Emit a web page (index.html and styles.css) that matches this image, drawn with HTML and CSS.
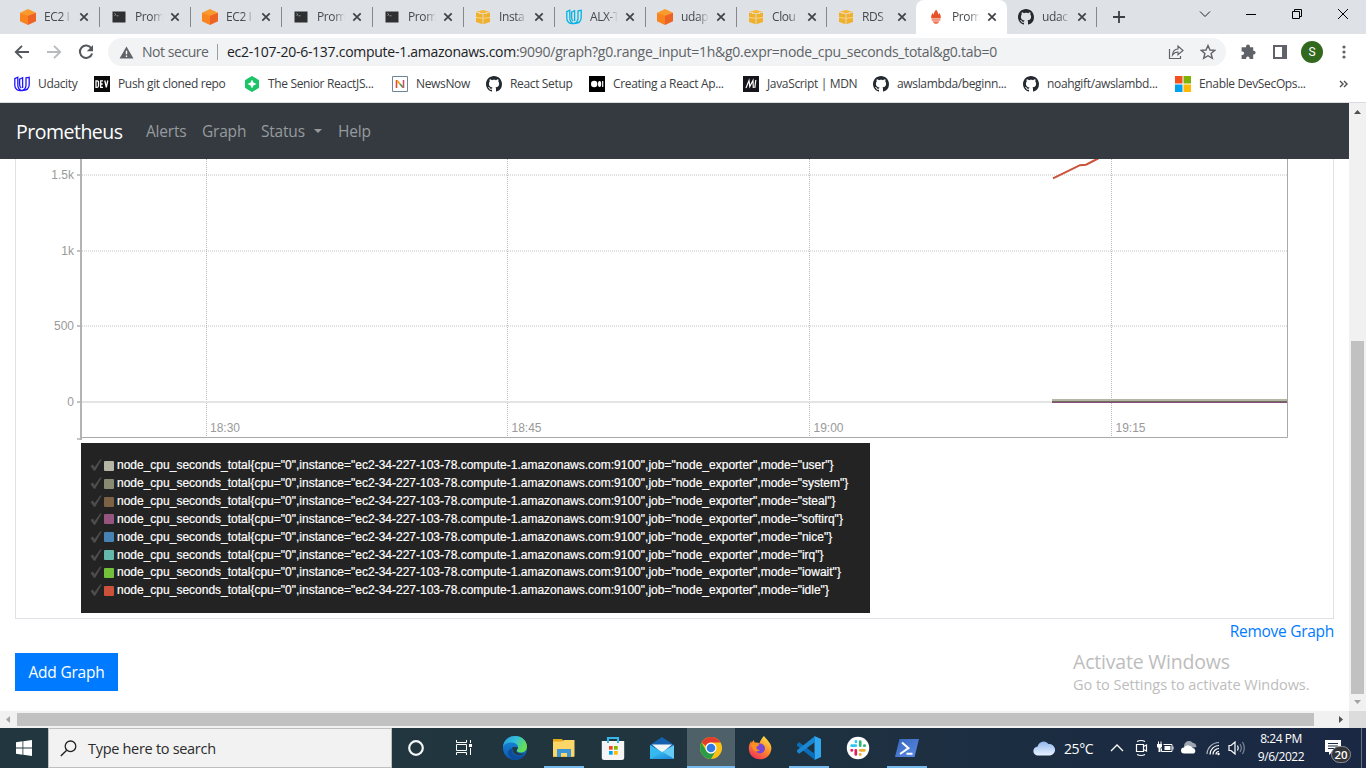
FILE: index.html
```html
<!DOCTYPE html>
<html lang="en">
<head>
<meta charset="utf-8">
<title>Prometheus Time Series Collection and Processing Server</title>
<link rel="stylesheet" href="styles.css">
</head>
<body>
<svg class="sprite" aria-hidden="true">
  <defs>
    <linearGradient id="edgeA" x1="0" y1="0" x2="1" y2="0.4"><stop offset="0" stop-color="#2499e0"/><stop offset=".55" stop-color="#35c1d8"/><stop offset="1" stop-color="#66e04f"/></linearGradient>
    <linearGradient id="edgeB" x1="0" y1="0" x2="0" y2="1"><stop offset="0" stop-color="#1b8fdc"/><stop offset="1" stop-color="#0a57b0"/></linearGradient>
    <linearGradient id="fox" x1="0.8" y1="0" x2="0.2" y2="1"><stop offset="0" stop-color="#ffe34a"/><stop offset=".45" stop-color="#ff9328"/><stop offset="1" stop-color="#f52a5b"/></linearGradient>
    <linearGradient id="cloudG" x1="0" y1="0" x2="0" y2="1"><stop offset="0" stop-color="#8fb6ee"/><stop offset="1" stop-color="#eaf2ff"/></linearGradient>
    <linearGradient id="mailG" x1="0" y1="0" x2="1" y2="1"><stop offset="0" stop-color="#3cc6f5"/><stop offset="1" stop-color="#1a86db"/></linearGradient>
    <linearGradient id="psG" x1="0" y1="0" x2="1" y2="1"><stop offset="0" stop-color="#3565bd"/><stop offset="1" stop-color="#5b8be2"/></linearGradient>
  </defs>
  <symbol id="ec2" viewBox="0 0 16 16"><path fill="#fb9a2c" d="M8 0l8 3.800L8 7.500 0 3.800z"/><path fill="#f8831f" d="M0 3.800L8 6.800V16l-8-3.800z"/><path fill="#ec6324" d="M16 3.800L8 6.800V16l8-3.800z"/></symbol>
  <symbol id="term" viewBox="0 0 16 16"><rect x="1.500" y="2.500" width="13" height="11" fill="#2d2f31"/><path d="M3.500 4.500l1.500 1-1.500 1M5.500 6.800h2" stroke="#aaa" fill="none" stroke-width=".8"/></symbol>
  <symbol id="aws" viewBox="0 0 16 16"><path fill="#f7b731" d="M8 1l6.500 1.700L8 4.600 1.500 2.700z"/><path fill="#efb02d" d="M1 3.500l6.600 1.800v9.900L1 13zM15 3.500L8.400 5.300v9.900L15 13z"/><path d="M4.500 2.800v2M11.500 2.800v2M1 8.500l6.600.8M15 8.500l-6.600.8" stroke="#ffe6a4" stroke-width=".7"/></symbol>
  <symbol id="uda" viewBox="0 0 16 16"><path fill="none" stroke="currentColor" stroke-width="1.300" d="M.8 2.700l3-1.500v7.600c0 3.100 1.200 5 4 5.800-4.300.6-7-1.600-7-5.300zM7.200 12c-1.300-.8-1.600-1.900-1.600-3.500V3.200l3-1.500V12M12 1.800l3.200-.5v7.200c0 3.500-2.600 6.100-7.400 6.100 2.800-.7 4.200-2.500 4.200-5.500z"/></symbol>
  <symbol id="prom" viewBox="0 0 16 16"><path fill="#e6522c" d="M8 .5c1.300 1.800 2.500 3 2 5 .9-.5 1.100-1 1.300-1.700 1 2 2 3.700 1.300 5.800H3.400c-.7-2.100.2-3.800 1.300-5.800.2.700.5 1.200 1.300 1.700C5.500 3.600 7 2.600 8 .500z"/><path fill="#ee7858" d="M3.600 10.200h8.800v1.500H3.600z"/><path fill="#ee7858" d="M5 12.300h6c-.2 1.900-1.400 2.700-3 2.700s-2.800-.8-3-2.700z"/></symbol>
  <symbol id="gh" viewBox="0 0 16 16"><path fill="#24292f" d="M8 0C3.580 0 0 3.580 0 8c0 3.540 2.290 6.530 5.470 7.590.4.070.55-.17.55-.38 0-.19-.01-.82-.01-1.490-2.010.37-2.530-.49-2.690-.94-.09-.23-.48-.94-.82-1.130-.28-.15-.68-.52-.01-.53.63-.01 1.080.58 1.230.82.72 1.210 1.870.87 2.330.66.070-.52.280-.87.510-1.070-1.780-.2-3.640-.89-3.640-3.950 0-.87.310-1.590.82-2.150-.08-.2-.36-1.020.08-2.120 0 0 .67-.21 2.200.82.640-.18 1.320-.27 2-.27s1.360.09 2 .27c1.530-1.040 2.200-.82 2.200-.82.440 1.100.160 1.920.080 2.120.510.56.820 1.270.820 2.150 0 3.070-1.870 3.750-3.650 3.950.290.25.540.73.540 1.480 0 1.070-.01 1.930-.01 2.200 0 .21.150.46.550.38A8.010 8.010 0 0016 8c0-4.420-3.580-8-8-8z"/></symbol>
  <symbol id="x" viewBox="0 0 10 10"><path d="M1.300 1.300l7.400 7.400M8.700 1.300L1.300 8.700" stroke="#3f4246" stroke-width="1.700"/></symbol>
  <symbol id="check" viewBox="0 0 12 12"><path d="M.5 6.900l2.400-1.300 1.600 2.600L10.400.3l1.200.4L5.200 11.700H3.900z" fill="#4d4d4d"/></symbol>
</svg>

<header class="tabs">
  <div class="tab"><svg class="fav"><use href="#ec2"/></svg><span class="tt">EC2 I</span><svg class="close"><use href="#x"/></svg></div>
  <div class="tab"><svg class="fav"><use href="#term"/></svg><span class="tt">Prom</span><svg class="close"><use href="#x"/></svg></div>
  <div class="tab"><svg class="fav"><use href="#ec2"/></svg><span class="tt">EC2 I</span><svg class="close"><use href="#x"/></svg></div>
  <div class="tab"><svg class="fav"><use href="#term"/></svg><span class="tt">Prom</span><svg class="close"><use href="#x"/></svg></div>
  <div class="tab"><svg class="fav"><use href="#term"/></svg><span class="tt">Prom</span><svg class="close"><use href="#x"/></svg></div>
  <div class="tab"><svg class="fav"><use href="#aws"/></svg><span class="tt">Insta</span><svg class="close"><use href="#x"/></svg></div>
  <div class="tab"><svg class="fav cyan"><use href="#uda"/></svg><span class="tt">ALX-T</span><svg class="close"><use href="#x"/></svg></div>
  <div class="tab"><svg class="fav"><use href="#ec2"/></svg><span class="tt">udap</span><svg class="close"><use href="#x"/></svg></div>
  <div class="tab narrow"><svg class="fav"><use href="#aws"/></svg><span class="tt">Clou</span><svg class="close"><use href="#x"/></svg></div>
  <div class="tab nosep"><svg class="fav"><use href="#aws"/></svg><span class="tt">RDS</span><svg class="close"><use href="#x"/></svg></div>
  <div class="tab active"><svg class="fav"><use href="#prom"/></svg><span class="tt">Prom</span><svg class="close"><use href="#x"/></svg></div>
  <div class="tab narrow"><svg class="fav"><use href="#gh"/></svg><span class="tt">udac</span><svg class="close"><use href="#x"/></svg></div>
  <svg class="plus" viewBox="0 0 12 12"><path d="M6 0v12M0 6h12" stroke="#3c4043" stroke-width="1.800"/></svg>
  <div class="winbtns">
    <svg viewBox="0 0 12 12"><path d="M1 3.500l5 5 5-5" fill="none" stroke="#222"/></svg>
    <svg viewBox="0 0 12 12"><path d="M1 6.500h10" stroke="#000"/></svg>
    <svg viewBox="0 0 12 12"><path d="M1.500 3.500h7v7h-7zM3.500 3.500v-2h7v7h-2" fill="none" stroke="#000"/></svg>
    <svg viewBox="0 0 12 12"><path d="M1 1l10 10M11 1L1 11" stroke="#000"/></svg>
  </div>
</header>

<div class="toolbar">
  <svg class="nav-i" viewBox="0 0 16 16"><path d="M15 8H2M8 1.800L1.800 8 8 14.200" fill="none" stroke="#54575b" stroke-width="1.900"/></svg>
  <svg class="nav-i" viewBox="0 0 16 16"><path d="M1 8h13M8 1.800L14.200 8 8 14.200" fill="none" stroke="#b9bbbe" stroke-width="1.900"/></svg>
  <svg class="nav-i" viewBox="0 0 16 16"><path d="M13.300 4.300A6.200 6.200 0 1 0 14.100 9.400" fill="none" stroke="#54575b" stroke-width="2"/><path d="M15 1v6.200H8.800z" fill="#54575b"/></svg>
  <div class="omni">
    <svg class="warn" viewBox="0 0 16 14"><path d="M8 .5L15.500 13.500H.5z" fill="#5f6368"/><path d="M8 5v4M8 10.200v1.600" stroke="#fff" stroke-width="1.500"/></svg>
    <span class="notsec">Not secure</span>
    <span class="url"><b>ec2-107-20-6-137.compute-1.amazonaws.com</b>:9090/graph?g0.range_input=1h&amp;g0.expr=node_cpu_seconds_total&amp;g0.tab=0</span>
    <svg class="share" viewBox="0 0 16 16"><path d="M1.500 5v9.500h11V12M4.500 11c.3-4 2.500-5.800 5.500-6V2l5 4.500-5 4.300V8C7.700 8 5.900 9 4.500 11z" fill="none" stroke="#5f6368" stroke-width="1.200"/></svg>
    <svg class="star" viewBox="0 0 16 16"><path d="M8 1.500l2 4.500 4.800.4-3.700 3.100 1.200 4.800L8 11.700l-4.300 2.600 1.200-4.800L1.200 6.400 6 6z" fill="none" stroke="#5f6368" stroke-width="1.400"/></svg>
  </div>
  <svg class="t-puz" viewBox="0 0 16 16"><path fill="#5f6368" d="M6 3.200V2.500a2 2 0 0 1 4 0v.7h3.200v3.500h.5a1.900 1.900 0 0 1 0 3.800h-.5V15H9.500v-.7a1.700 1.700 0 0 0-3.400 0v.7H1.600v-4h.8a1.700 1.700 0 0 0 0-3.500h-.8V3.200z"/></svg>
  <svg class="t-side" viewBox="0 0 14 14"><path d="M1 1h12v12H1z" fill="#fff" stroke="#5f6368" stroke-width="2"/><path d="M9 1h4v12H9z" fill="#5f6368"/></svg>
  <span class="avatar">S</span>
  <svg class="t-dots" viewBox="0 0 4 14"><circle cx="2" cy="2" r="1.600" fill="#5f6368"/><circle cx="2" cy="7" r="1.600" fill="#5f6368"/><circle cx="2" cy="12" r="1.600" fill="#5f6368"/></svg>
</div>

<nav class="bookmarks">
  <div class="bm w80"><svg class="blue"><use href="#uda"/></svg><span>Udacity</span></div>
  <div class="bm w150"><svg viewBox="0 0 16 16"><path d="M0 0h16v16H0z" fill="#0a0a0a"/><path d="M2 4.800h1.200q1.300 0 1.300 1.500v3.500q0 1.500-1.300 1.500H2zM9 4.800H6.700v6.500H9M6.700 8h2M10.800 4.500l1.500 6.800 1.500-6.800" stroke="#fff" fill="none" stroke-width="1.300"/></svg><span>Push git cloned repo</span></div>
  <div class="bm w148"><svg viewBox="0 0 16 16"><path d="M8 .5l6.500 3.800v7.400L8 15.500l-6.500-3.800V4.300z" fill="#19c566" stroke="#19c566" stroke-linejoin="round"/><path d="M8 3.500L9.500 6.500 12.500 8 9.500 9.500 8 12.500 6.500 9.500 3.500 8l3-1.500z" fill="#fff"/></svg><span>The Senior ReactJS...</span></div>
  <div class="bm w94"><svg viewBox="0 0 16 16"><path d="M.5.5h15v15H.5z" fill="#fff" stroke="#6d8799"/><path d="M4.500 12V4" stroke="#e6453a" stroke-width="1.600"/><path d="M5 4.500l3 3.500" stroke="#f0a020" stroke-width="1.800"/><path d="M8 8l3 3.500" stroke="#43a047" stroke-width="1.800"/><path d="M11.500 4v8" stroke="#d0506e" stroke-width="1.600"/></svg><span>NewsNow</span></div>
  <div class="bm w103"><svg><use href="#gh"/></svg><span>React Setup</span></div>
  <div class="bm w154"><svg viewBox="0 0 16 16"><path d="M0 0h16v16H0z"/><circle cx="5.200" cy="8" r="3.200" fill="#fff"/><ellipse cx="10.600" cy="8" rx="1.600" ry="3" fill="#fff"/><path d="M13.700 5v6" stroke="#fff" stroke-width="1.200"/></svg><span>Creating a React Ap...</span></div>
  <div class="bm w130"><svg viewBox="0 0 16 16"><path d="M0 0h16v16H0z" fill="#15141a"/><path d="M3 12L6 4.500 6.800 10.500 10 4.500l.3 7.500M12.800 4l-1 8" stroke="#fff" fill="none" stroke-width="1.200"/></svg><span>JavaScript | MDN</span></div>
  <div class="bm w150"><svg><use href="#gh"/></svg><span>awslambda/beginn...</span></div>
  <div class="bm w152"><svg><use href="#gh"/></svg><span>noahgift/awslambd...</span></div>
  <div class="bm w150"><svg viewBox="0 0 16 16"><path d="M0 0h7.500v7.500H0z" fill="#f4511e"/><path d="M8.500 0H16v7.500H8.500z" fill="#7cb305"/><path d="M0 8.500h7.500V16H0z" fill="#00a1f1"/><path d="M8.500 8.500H16V16H8.500z" fill="#ffb900"/></svg><span>Enable DevSecOps...</span></div>
  <svg class="more" viewBox="0 0 9 8"><path d="M1 1l3 3-3 3M5 1l3 3-3 3" fill="none" stroke="#4b4e52" stroke-width="1.400"/></svg>
</nav>

<div class="viewport">
  <main class="page">
    <nav class="navbar">
      <a class="brand">Prometheus</a>
      <a class="nl alerts">Alerts</a><a class="nl graphl">Graph</a><a class="nl status">Status<i class="caret"></i></a><a class="nl">Help</a>
    </nav>
    <section class="panel">
      <svg class="chart" viewBox="16 159 1317 282">
        <g stroke="#e0e0e0" stroke-width="2" stroke-dasharray="1 1">
          <path d="M82 175H1287M82 251H1287M82 326H1287"/>
          <path d="M206.500 159V437M507.500 159V437M809.500 159V437M1111.500 159V437" stroke="#b8b8b8" stroke-width="1"/>
        </g>
        <path d="M77 402H1052" stroke="#e4e4e4" stroke-width="2"/>
        <path d="M77 175h4M77 251h4M77 326h4M77 402h4M77 439h4" stroke="#c4c4c4" stroke-width="2"/>
        <path d="M81 159V440" stroke="#b3b3b3" stroke-width="2"/>
        <path d="M82 437.500H1287.500V159" fill="none" stroke="#a9a9a9"/>
        <path d="M1053 178.300L1080 165.200 1086 164.700 1098 158.500 1104 155" fill="none" stroke="#cb513a" stroke-width="2"/>
        <path d="M1052 400H1287" stroke="#b6b6a4" stroke-width="2"/>
        <path d="M1052 401.500H1287" stroke="#6d6e5f"/>
        <path d="M1052 402.500H1287" stroke="#8a4d78"/>
        <g class="yl"><text x="74" y="179">1.5k</text><text x="74" y="255">1k</text><text x="74" y="330">500</text><text x="74" y="406">0</text></g>
        <g class="xl"><text x="210" y="432">18:30</text><text x="511.500" y="432">18:45</text><text x="813.500" y="432">19:00</text><text x="1115.500" y="432">19:15</text></g>
      </svg>
      <ul class="legend">
        <li><svg class="ck"><use href="#check"/></svg><i class="sw user"></i>node_cpu_seconds_total{cpu="0",instance="ec2-34-227-103-78.compute-1.amazonaws.com:9100",job="node_exporter",mode="user"}</li>
        <li><svg class="ck"><use href="#check"/></svg><i class="sw system"></i>node_cpu_seconds_total{cpu="0",instance="ec2-34-227-103-78.compute-1.amazonaws.com:9100",job="node_exporter",mode="system"}</li>
        <li><svg class="ck"><use href="#check"/></svg><i class="sw steal"></i>node_cpu_seconds_total{cpu="0",instance="ec2-34-227-103-78.compute-1.amazonaws.com:9100",job="node_exporter",mode="steal"}</li>
        <li><svg class="ck"><use href="#check"/></svg><i class="sw softirq"></i>node_cpu_seconds_total{cpu="0",instance="ec2-34-227-103-78.compute-1.amazonaws.com:9100",job="node_exporter",mode="softirq"}</li>
        <li><svg class="ck"><use href="#check"/></svg><i class="sw nice"></i>node_cpu_seconds_total{cpu="0",instance="ec2-34-227-103-78.compute-1.amazonaws.com:9100",job="node_exporter",mode="nice"}</li>
        <li><svg class="ck"><use href="#check"/></svg><i class="sw irq"></i>node_cpu_seconds_total{cpu="0",instance="ec2-34-227-103-78.compute-1.amazonaws.com:9100",job="node_exporter",mode="irq"}</li>
        <li><svg class="ck"><use href="#check"/></svg><i class="sw iowait"></i>node_cpu_seconds_total{cpu="0",instance="ec2-34-227-103-78.compute-1.amazonaws.com:9100",job="node_exporter",mode="iowait"}</li>
        <li><svg class="ck"><use href="#check"/></svg><i class="sw idle"></i>node_cpu_seconds_total{cpu="0",instance="ec2-34-227-103-78.compute-1.amazonaws.com:9100",job="node_exporter",mode="idle"}</li>
      </ul>
    </section>
    <a class="remove">Remove Graph</a>
    <button class="add">Add Graph</button>
    <div class="activate"><p class="a1">Activate Windows</p><p class="a2">Go to Settings to activate Windows.</p></div>
  </main>
  <div class="vscroll"><svg viewBox="0 0 17 17"><path d="M5 11h7L8.500 7z" fill="#505050"/></svg><div class="vthumb"></div><svg viewBox="0 0 17 17"><path d="M5 6h7L8.500 10z" fill="#a3a3a3"/></svg></div>
  <div class="hscroll"><svg viewBox="0 0 17 17"><path d="M10 5v7L6 8.500z" fill="#a3a3a3"/></svg><div class="hthumb"></div><svg viewBox="0 0 17 17"><path d="M7 5v7l4-3.500z" fill="#505050"/></svg></div>
  <div class="corner"></div>
</div>

<footer class="taskbar">
  <div class="start"><svg viewBox="0 0 16 16"><path fill="#fff" d="M0 2.200L6.500 1.300V7.600H0zM7.300 1.200L16 0V7.600H7.300zM0 8.400h6.500v6.300L0 13.800zM7.300 8.400H16V16l-8.700-1.200z"/></svg></div>
  <div class="search"><svg viewBox="0 0 17 17"><circle cx="10.500" cy="6.300" r="5.300" fill="none" stroke="#222" stroke-width="1.300"/><path d="M6.700 10.200L.8 16" stroke="#222" stroke-width="1.400"/></svg><span>Type here to search</span></div>
  <div class="apps">
    <div class="app c1"><svg viewBox="0 0 24 24"><circle cx="12" cy="12" r="6.800" fill="none" stroke="#f4f6f7" stroke-width="2.200"/></svg></div>
    <div class="app c2"><svg viewBox="0 0 24 24"><path d="M3.500 4v2.500h10V4M3.500 19v-2.500h10V19M3.500 8.500h10v6h-10zM17.500 4v3M17.500 12v7" fill="none" stroke="#fff"/><path d="M16 8h3v3h-3z" fill="#fff"/></svg></div>
    <div class="app"><svg viewBox="0 0 24 24"><circle cx="12" cy="12" r="12" fill="url(#edgeB)"/><path d="M0 11C.5 4.500 5.500 0 12 0c7 0 12 5 12 10.500 0 4-3 6-6.200 6-2.500 0-4-1-4-2 0-.8 1.200-1.300 1.200-3.300C15 8.500 12 6.500 8 6.500S.8 8.500 0 11z" fill="url(#edgeA)"/><path d="M9 12.500c-.5 6 5 9.500 11 7l2-1.400c-2 3.600-6 5.900-10 5.900-4.500-1-7-4.500-7-7.500 0-2 1.500-3.500 4-4z" fill="#0d4d9b"/><path d="M9.500 11c-1 4 2 8.500 7 8.200 2.500-.2 4.500-1 5.800-2.200-1.500 .7-8.500 1.500-9-2.500 .3-.8 1.700-1.300 1.700-3.300z" fill="#203b47"/></svg></div>
    <div class="app on"><svg viewBox="0 0 24 24"><path d="M1 3h9l1.500 2H22v16H1z" fill="#e8a714"/><path d="M1 5.500h9L12 4h10.500v16.500H1z" fill="#fcd667"/><path d="M5 21v-8h14v8h-4v-4H9v4z" fill="#3d94d6"/></svg></div>
    <div class="app"><svg viewBox="0 0 24 24"><path d="M7 6V2h10v4" fill="none" stroke="#37b6ea" stroke-width="2.200"/><path d="M.8 5h22.400v16.500q0 2.500-2.500 2.500H3.300q-2.500 0-2.500-2.500z" fill="#f5f5f5"/><path d="M7 2v5M17 2v5" stroke="#37b6ea" stroke-width="2"/><path d="M8 10h3.700v3.700H8z" fill="#ee4b23"/><path d="M13 10h3.700v3.700H13z" fill="#7fba00"/><path d="M8 15h3.700v3.700H8z" fill="#00a4ef"/><path d="M13 15h3.700v3.700H13z" fill="#ffb900"/></svg></div>
    <div class="app"><svg viewBox="0 0 24 24"><path d="M0 9L12 1l12 8v6H0z" fill="#1560ae"/><path d="M2 8.500h20L12 17z" fill="#f1f5f8"/><path d="M0 9l24 14H0z" fill="#35b9ee"/><path d="M24 9v14L12 16z" fill="#64cdf5"/><path d="M0 23L12 16l12 7z" fill="url(#mailG)"/></svg></div>
    <div class="app cur"><svg viewBox="0 0 24 24"><circle cx="12" cy="12" r="11" fill="#fbc116"/><path d="M2.500 6.500A11 11 0 0 1 21.530 6.500H12a5.500 5.500 0 0 0-5 3.500z" fill="#e33b2e"/><path d="M2.500 6.500A11 11 0 0 0 12 23l4.800-8.300A5.500 5.500 0 0 1 7.200 14.700z" fill="#299c4a"/><circle cx="12" cy="12" r="5.500" fill="#fff"/><circle cx="12" cy="12" r="4.300" fill="#2f7be8"/></svg></div>
    <div class="app"><svg viewBox="0 0 24 24"><path d="M16 0c1 2 3 3 4.500 5.500C22 7 24 10 23.200 14 22 20 17.500 23.300 12 23.300 5.500 23.300 1 19 .8 12.500.7 9 2 7 3.200 5l.5 2C4.500 5.500 5 4.500 5.800 4l.8 2.500c1.500-.3 3.500 0 5 .5C12.500 4 14 2 16 0z" fill="url(#fox)"/><circle cx="12" cy="12.500" r="5" fill="#7a46d8"/><path d="M3 8.500c3-2 6-1.500 8.500.5l-3 1.800c-.5 2 1 3.500 3.500 3.200-3 3-7 .8-7.500-2z" fill="#ff8f1f"/></svg></div>
    <div class="app on"><svg viewBox="0 0 24 24"><path d="M17.500 0L24 3v18l-6.500 3z" fill="#31a7f0"/><path d="M0 8l2.200-1.800L18 18v6L0 9.700z" fill="#0a6fb8"/><path d="M0 16l2.200 1.800L18 6V0L0 14.300z" fill="#1b87d3"/></svg></div>
    <div class="app"><svg viewBox="0 0 24 24"><circle cx="12" cy="12" r="11.200" fill="#fff"/><g stroke-width="2.700" stroke-linecap="round"><path d="M9.900 5.300V6M5.600 9.700h4.200" stroke="#36c5f0"/><path d="M14.200 5.600v4.100M18.300 9.700h.4" stroke="#2eb67d"/><path d="M9.800 14.300v4.100M5.600 14.300H6" stroke="#e01e5a"/><path d="M14.200 14.300h4.200M14.200 18.300v.4" stroke="#ecb22e"/></g></svg></div>
    <div class="app on"><svg viewBox="0 0 24 24"><path d="M4.500 3H24l-4.500 18H0z" fill="url(#psG)"/><path d="M7 6.500l6.500 5.700L5 18M11.500 17.700h6" fill="none" stroke="#fff" stroke-width="2"/></svg></div>
  </div>
  <div class="tray">
    <svg class="wx" viewBox="0 0 22 16"><path d="M5 15.500a4.500 4.500 0 0 1-.3-9A6 6 0 0 1 15.500 4a5.500 5.500 0 0 1 1.500 11.500z" fill="url(#cloudG)"/></svg>
    <span class="temp">25°C</span>
    <svg class="tr" viewBox="0 0 24 24"><path d="M6 15l6-6 6 6" fill="none" stroke="#fff" stroke-width="1.300"/></svg>
    <svg class="tr" viewBox="0 0 24 24"><path d="M7.500 8.500h7v7h-7zM14.500 10.500l3-1.500v6l-3-1.500M8 5.500q4-2 8 0M8 18.500q4 2 8 0" fill="none" stroke="#fff" stroke-width="1.200"/></svg>
    <svg class="tr" viewBox="0 0 24 24"><path d="M10.500 8.500h8.500v7H8.500v-3M20 10.500v3" fill="none" stroke="#fff"/><path d="M11.500 10h6v4h-6zM4 8h5v3L7.500 12v4h-2v-4L4 11zM5 5.500h1V8H5zM7.500 5.500h1V8h-1z" fill="#fff"/></svg>
    <svg class="tr" viewBox="0 0 24 24"><path d="M8 13a4.500 4.500 0 0 1 8-6q3 0 3.500 4z" fill="#9da5b3"/><path d="M7 17.500a3 3 0 0 1 0-6 5 5 0 0 1 8.500.5 3 3 0 0 1 1.500 5.500z" fill="#fff"/></svg>
    <svg class="tr" viewBox="0 0 24 24"><g fill="none" stroke="#fff" stroke-width="1.200"><path d="M6 18A12 12 0 0 1 18 6.500" stroke="#b5bbc6"/><path d="M9 18.500A9 9 0 0 1 18 9.500M12 18.500a6 6 0 0 1 6-6M15 18.500a3 3 0 0 1 3-3"/></g><circle cx="17.500" cy="18" r="1.200" fill="#fff"/></svg>
    <svg class="tr" viewBox="0 0 24 24"><path d="M4 9.500h2l4-3.500v12l-4-3.500H4z" fill="none" stroke="#fff" stroke-width="1.200"/><path d="M12.500 9.500q1.500 2.500 0 5" fill="none" stroke="#fff" stroke-width="1.200"/><path d="M15 8q2.600 4 0 8M17.500 6q3.600 6 0 12" fill="none" stroke="#7f899b" stroke-width="1.200"/></svg>
    <div class="clock"><span>8:24 PM</span><span>9/6/2022</span></div>
    <div class="note"><svg viewBox="0 0 16 15"><path d="M0 0h16v12H7l-3 3v-3H0z" fill="#fff"/><path d="M3 3.500h10M3 6h10M3 8.500h7" stroke="#1b2b42"/></svg><span class="badge">20</span></div>
    <i class="peek"></i>
  </div>
</footer>
</body>
</html>
```
FILE: styles.css
```css
* { box-sizing: border-box; }
body { margin: 0; width: 1366px; height: 768px; overflow: hidden; background: #fff; font-family: "Open Sans", "Noto Sans", sans-serif; display: flex; flex-direction: column; }
svg { display: block; flex: none; }
span, a { white-space: nowrap; }
.sprite { position: absolute; width: 0; height: 0; }

/* tab strip */
.tabs { height: 34px; background: #dee1e6; display: flex; align-items: center; padding-left: 9px; flex: none; }
.tab { width: 91px; height: 34px; flex: none; display: flex; align-items: center; padding-left: 11px; background: linear-gradient(#85898f, #85898f) right 7px / 1px 20px no-repeat; }
.tab.narrow { width: 90px; }
.tab.nosep { width: 89px; background: none; }
.tab.active { background: #fff; border-radius: 8px 8px 0 0; padding-left: 12px; }
.tab.active .close { margin-left: 7px; }
.fav { width: 16px; height: 16px; }
.cyan { color: #02b3e4; }
.tt { width: 28px; margin-left: 8px; font-size: 12px; line-height: 18px; letter-spacing: -.4px; color: #45494d; -webkit-mask-image: linear-gradient(90deg, #000 60%, transparent); mask-image: linear-gradient(90deg, #000 60%, transparent); }
.close { width: 10px; height: 10px; margin-left: 7px; }
.plus { width: 12px; height: 12px; margin-left: 16px; }
.winbtns { margin-left: auto; display: flex; gap: 34px; padding: 0 17px 6px 0; }
.winbtns svg { width: 12px; height: 12px; }

/* address row */
.toolbar { height: 36px; flex: none; display: flex; align-items: center; padding-left: 14px; }
.nav-i { width: 16px; height: 16px; margin-right: 16px; }
.omni { width: 1118px; height: 28px; margin-left: -2px; border-radius: 14px; background: #f1f3f4; display: flex; align-items: center; padding-left: 11px; font-size: 14px; color: #5f6368; }
.warn { width: 15px; height: 13px; }
.notsec { width: 76px; margin-left: 8px; height: 16px; line-height: 15px; border-right: 1px solid #9b9ea2; letter-spacing: -.45px; }
.url { width: 941px; margin-left: 9px; line-height: 18px; letter-spacing: -.27px; }
.url b { font-weight: 400; color: #202124; }
.share { width: 16px; height: 16px; }
.star { width: 16px; height: 16px; margin-left: 16px; }
.t-puz { width: 16px; height: 16px; margin-left: 14px; }
.t-side { width: 14px; height: 14px; margin-left: 17px; }
.avatar { width: 22px; height: 22px; margin-left: 14px; border-radius: 50%; background: #33691e; color: #fff; font: 12px/22px Roboto, sans-serif; text-align: center; }
.t-dots { width: 4px; height: 14px; margin-left: 19px; }

/* bookmarks */
.bookmarks { height: 33px; flex: none; display: flex; align-items: center; padding: 0 0 4px 14px; border-bottom: 1px solid #dadce0; font-size: 12px; letter-spacing: -.35px; color: #3c4043; }
.bm { display: flex; gap: 8px; align-items: center; flex: none; }
.bm span { line-height: 16px; padding-bottom: 1px; }
.bm svg { width: 16px; height: 16px; }
.blue { color: #2015ff; }
.w80 { width: 80px; } .w94 { width: 94px; } .w103 { width: 103px; } .w130 { width: 130px; }
.w148 { width: 148px; } .w150 { width: 150px; } .w152 { width: 152px; } .w154 { width: 154px; }
.more { width: 9px; height: 8px; margin-left: 14px; }

/* page */
.viewport { height: 625px; flex: none; display: grid; grid-template: 608px 17px / 1349px 17px; }
.page { display: flex; flex-direction: column; overflow: hidden; position: relative; }
.navbar { height: 56px; flex: none; background: #343a40; display: flex; align-items: center; padding-left: 16px; color: #989b9e; font-size: 15.500px; letter-spacing: -.2px; }
.brand { width: 130px; color: #fff; font-size: 19.500px; letter-spacing: -.5px; }
.nl.alerts { width: 56px; } .nl.graphl { width: 59px; } .nl.status { width: 77px; }
.caret { display: inline-block; margin-left: 9px; vertical-align: 4px; border: 4.500px solid transparent; border-top-color: #989b9e; border-bottom: 0; }
.panel { width: 1319px; height: 460px; flex: none; margin-left: 15px; border: 1px solid #dee2e6; border-top: 0; }
.chart { width: 1317px; height: 282px; }
.chart text { font: 12px "Liberation Sans", Arial, sans-serif; fill: #9a9a9a; }
.yl { text-anchor: end; }
.legend { width: 789px; height: 170px; margin: 2px 0 0 65px; padding: 14.400px 9px 0; background: #232323; color: #fff; list-style: none; font: 12px/17.850px "Liberation Sans", Arial, sans-serif; }
.legend li { display: flex; align-items: center; height: 17.850px; white-space: nowrap; -webkit-text-stroke: .2px #fff; }
.ck { width: 12px; height: 12px; margin-bottom: 2px; }
.sw { width: 10px; height: 10px; margin: 0 3px 1px 2px; border-radius: 1px; flex: none; }
.user { background: #b6b6a4; } .system { background: #888a72; } .steal { background: #7d6145; } .softirq { background: #96557e; }
.nice { background: #4682b4; } .irq { background: #65b9ac; } .iowait { background: #73c03a; } .idle { background: #cb513a; }
.remove { align-self: flex-end; margin-right: 15px; color: #007bff; font-size: 15.500px; letter-spacing: -.28px; line-height: 25px; }
.add { width: 103px; height: 38px; margin: 9px 0 0 15px; padding: 0; border: 0; background: #007bff; color: #fff; font: 15.500px "Open Sans", sans-serif; letter-spacing: -.2px; }
.activate { position: absolute; left: 1073px; top: 546px; color: #bdbdbd; }
.activate p { margin: 0; white-space: nowrap; }
.a1 { font-size: 19.500px; line-height: 26px; letter-spacing: -.2px; }
.a2 { font-size: 14.500px; line-height: 19px; letter-spacing: -.03px; }
.vscroll { background: #f1f1f1; display: flex; flex-direction: column; }
.vscroll svg, .hscroll svg { width: 17px; height: 17px; }
.vthumb { width: 13px; height: 353px; margin: 221px 0 0 2px; background: #c1c1c1; }
.hscroll { background: #f1f1f1; display: flex; }
.hthumb { width: 1297px; height: 13px; margin: 2px 18px 0 0; background: #c1c1c1; }
.corner { background: #dcdcdc; }

/* taskbar */
.taskbar { height: 40px; flex: none; display: flex; background: linear-gradient(90deg, #22363f, #21353f 45%, #1b2c42 80%, #1b2844); color: #fff; }
.start { width: 48px; display: grid; place-items: center; }
.start svg { width: 16px; height: 16px; }
.search { width: 344px; border: 1px solid #bfbfbf; background: #f2f2f2; display: flex; align-items: center; padding-left: 11px; font-size: 14.500px; letter-spacing: -.3px; color: #2b2b2b; }
.search svg { width: 17px; height: 17px; margin-right: 11px; }
.apps { display: flex; }
.app { width: 49px; display: grid; place-items: center; }
.app svg { width: 24px; height: 24px; }
.c1 { width: 48px; } .c2 { width: 50px; }
.on { background: linear-gradient(#76b9ed, #76b9ed) center bottom / 40px 2px no-repeat; }
.cur { background: linear-gradient(#76b9ed, #76b9ed) 1px bottom / 48px 2px no-repeat, linear-gradient(#4e6068, #4e6068) 1px 0 / 48px 40px no-repeat; }
.tray { margin-left: auto; display: flex; align-items: center; }
.wx { width: 22px; height: 16px; }
.temp { width: 41px; margin-left: 9px; font-size: 14px; letter-spacing: -.4px; }
.tr { width: 24px; height: 24px; }
.clock { width: 64px; display: flex; flex-direction: column; align-items: center; font-size: 12px; letter-spacing: -.45px; line-height: 18px; }
.note { width: 48px; height: 40px; padding: 12px 0 0 12px; position: relative; }
.note svg { width: 16px; height: 15px; }
.badge { position: absolute; left: 18px; top: 18px; width: 20px; height: 17px; border: 1px solid #8c9099; border-radius: 9px; background: #333438; font-size: 11.500px; font-weight: 600; line-height: 15px; text-align: center; }
.peek { width: 5px; height: 40px; border-left: 1px solid #66728a; }
```
